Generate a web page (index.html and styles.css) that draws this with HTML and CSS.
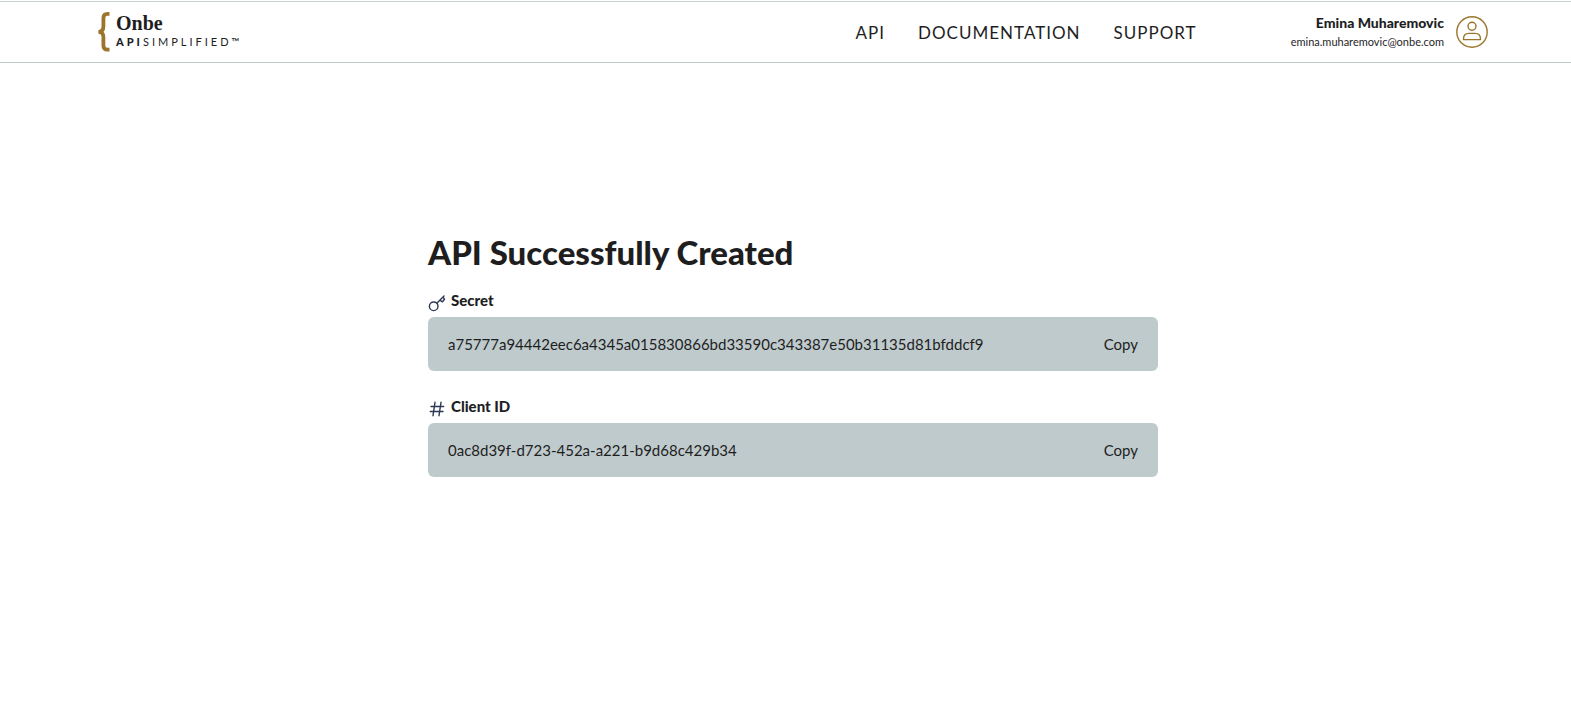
FILE: index.html
```html
<!DOCTYPE html>
<html lang="en">
<head>
<meta charset="utf-8">
<meta name="viewport" content="width=device-width, initial-scale=1">
<title>Onbe API Simplified</title>
<link rel="stylesheet" href="styles.css">
</head>
<body>
<header class="header">
  <a class="logo" href="#">
    <svg class="logo-brace" viewBox="0 0 12 40" aria-hidden="true">
      <path d="M11.500 1.900H9.500Q5.400 1.900 5.400 6v8.500Q5.400 19.800 0.400 19.800Q5.400 19.800 5.400 25.100v8.500Q5.400 37.700 9.500 37.700H11.500" fill="none" stroke="#9c752d" stroke-width="3.800"/>
    </svg>
    <span class="logo-text">
      <span class="logo-name">Onbe</span>
      <span class="logo-tag"><b>API</b>SIMPLIFIED<span class="logo-tm">™</span></span>
    </span>
  </a>
  <nav class="nav">
    <a href="#">API</a>
    <a href="#">DOCUMENTATION</a>
    <a href="#">SUPPORT</a>
  </nav>
  <div class="user">
    <div class="user-text">
      <span class="user-name">Emina Muharemovic</span>
      <span class="user-mail">emina.muharemovic@onbe.com</span>
    </div>
    <button class="avatar" type="button" aria-label="Account">
      <svg viewBox="0 0 32 32" fill="none" stroke="#9c752d" stroke-width="1.4" stroke-linejoin="round">
        <circle cx="16" cy="16" r="15.200"/>
        <circle cx="16" cy="10.300" r="4"/>
        <path d="M7.500 23.600V23Q7.500 17.400 13 17.400H19Q24.500 17.400 24.500 23V23.600Z"/>
      </svg>
    </button>
  </div>
</header>
<main class="main">
  <div class="content">
    <h1 class="title">API Successfully Created</h1>
    <section class="field">
      <h2 class="label">
        <svg class="label-icon" viewBox="0 0 18 18" fill="none" stroke="#2d3954" stroke-width="1.4" stroke-linecap="round" stroke-linejoin="round" aria-hidden="true">
          <circle cx="5.700" cy="12.300" r="4.300"/>
          <path d="M8.800 9.200L16 2M15 3L16.500 5.300L14.500 7.800L11.800 6.200"/>
        </svg>
        Secret
      </h2>
      <div class="box">
        <span class="value">a75777a94442eec6a4345a015830866bd33590c343387e50b31135d81bfddcf9</span>
        <button class="copy" type="button">Copy</button>
      </div>
    </section>
    <section class="field">
      <h2 class="label">
        <svg class="label-icon" viewBox="0 0 18 18" fill="none" stroke="#2d3954" stroke-width="1.4" stroke-linecap="round" aria-hidden="true">
          <path d="M7 2.300L5 15.700M13 2.300L11 15.700M3 6.500H15.700M2.300 11.500H15"/>
        </svg>
        Client ID
      </h2>
      <div class="box">
        <span class="value">0ac8d39f-d723-452a-a221-b9d68c429b34</span>
        <button class="copy" type="button">Copy</button>
      </div>
    </section>
  </div>
</main>
</body>
</html>
```
FILE: styles.css
```css
* {
  box-sizing: border-box;
}

body {
  margin: 0;
  background: #fff;
  color: #1e1e1f;
  font-family: Lato, "Open Sans", sans-serif;
  font-size: 15px;
}

a {
  color: inherit;
  text-decoration: none;
}

button {
  padding: 0;
  border: 0;
  background: none;
  color: inherit;
  font: inherit;
  cursor: pointer;
}

.header {
  display: flex;
  align-items: center;
  height: 62px;
  margin-top: 1px;
  padding: 0 83px 0 98px;
  border-top: 1px solid #c9d1d2;
  border-bottom: 1px solid #bfc9cb;
}

.logo {
  display: flex;
  align-items: center;
  gap: 6px;
  margin-right: auto;
}

.logo-brace {
  width: 12px;
  height: 40px;
}

.logo-text {
  display: flex;
  flex-direction: column;
}

.logo-name {
  font-family: "Liberation Serif", serif;
  font-size: 20px;
  font-weight: 700;
  line-height: 20px;
}

.logo-tag {
  font-size: 11px;
  font-weight: 400;
  letter-spacing: 3px;
  line-height: 18px;
}

.logo-tag b {
  font-weight: 900;
}

.logo-tm {
  letter-spacing: 0;
}

.nav {
  display: flex;
  gap: 33px;
  font-size: 17px;
  letter-spacing: 1px;
}

.user {
  display: flex;
  align-items: center;
  gap: 12px;
  margin-left: 94px;
}

.user-text {
  display: flex;
  flex-direction: column;
  align-items: flex-end;
}

.user-name {
  font-size: 14px;
  font-weight: 900;
  line-height: 20px;
}

.user-mail {
  font-size: 11px;
  line-height: 18px;
}

.avatar,
.avatar svg {
  display: block;
  width: 32px;
  height: 32px;
}

.main {
  padding: 167px 83px 40px 98px;
}

.content {
  max-width: 730px;
  margin: 0 auto;
}

.title {
  margin: 0 0 14px;
  font-size: 33px;
  font-weight: 900;
  line-height: 44px;
}

.field {
  margin-bottom: 23px;
}

.label {
  display: flex;
  align-items: center;
  gap: 5px;
  margin: 0 0 5px;
  font-size: 15px;
  font-weight: 900;
  line-height: 24px;
}

.label-icon {
  flex: none;
  align-self: flex-end;
  width: 18px;
  height: 18px;
}

.box {
  display: flex;
  align-items: center;
  justify-content: space-between;
  gap: 20px;
  min-height: 54px;
  padding: 12px 20px;
  border-radius: 6px;
  background: #bfcacc;
}

.value {
  min-width: 0;
  overflow-wrap: anywhere;
}
```
